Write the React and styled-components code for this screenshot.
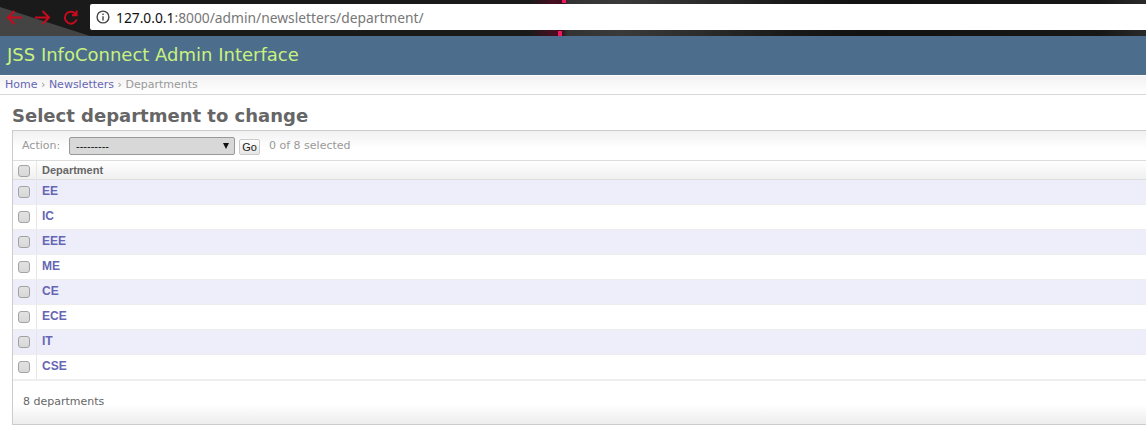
import React from "react";
import styled, { createGlobalStyle } from "styled-components";

const Global = createGlobalStyle`
  html, body { margin: 0; padding: 0; background: #fff; overflow: hidden; }
  body { width: 1146px; height: 426px; font-family: "DejaVu Sans", sans-serif; }
`;
const Page = styled.div`display: flex; flex-direction: column; width: 1146px; height: 426px; overflow: hidden;`;
const Chrome = styled.div`
  position: relative; height: 36px; box-sizing: border-box; padding: 4px 0 6px 0; display: flex; align-items: stretch; flex: none;
  background: linear-gradient(90deg, #1a1a1a 0 530px, #4a0c22 555px, #351020 562px, #333 568px, #3a3a3a 620px, #2c2c2c 700px, #191919 790px, #121212 860px, #171717 1100px, #2a2a2a 1146px);
`;
const Wedge = styled.svg`position: absolute; left: 0; top: 0; width: 90px; height: 36px;`;
const Glow = styled.span`position: absolute; left: ${p => p.$x}px; top: ${p => p.$y}px; width: 4px; height: ${p => p.$h}px; background: #f5155c;`;
const Nav = styled.div`position: relative; width: 90px; flex: none;`;
const NavIcon = styled.svg`position: absolute; top: 5px; width: 17px; height: 17px; left: ${p => p.$x}px; fill: none; stroke: #c90a1c; stroke-width: 2;`;
const Address = styled.div`
  position: relative; flex: 1; background: #fff; border-radius: 2px 0 0 2px; display: flex; align-items: center; padding-left: 6px;
  font: 13.8px "Noto Sans", sans-serif; color: #777; gap: 6px; height: 26px;
`;
const Host = styled.span`color: #111;`;
const Banner = styled.header`
  height: 39px; flex: none; box-sizing: border-box; background: #4d6d8c; color: #c9f27f; font-size: 18px; line-height: 38px; padding-left: 7px;
`;
const Crumbs = styled.nav`
  height: 19px; flex: none; box-sizing: border-box; margin-top: 1px; border-bottom: 1px solid #d8d8d8; background: linear-gradient(#f2f2f2, #fff);
  font-size: 11px; line-height: 17px; padding-left: 5px; color: #999;
  a { color: #6666b3; }
`;
const Sep = styled.span`color: #999;`;
const Content = styled.main`padding: 0 0 0 12px; flex: 1; display: flex; flex-direction: column;`;
const Title = styled.h1`margin: 0; height: 35px; font-size: 18px; font-weight: bold; color: #666; line-height: 41px;`;
const Panel = styled.section`border: 1px solid #ccc; border-right: 0; width: 1134px; box-sizing: border-box; display: flex; flex-direction: column;`;
const Actions = styled.div`
  height: 30px; box-sizing: border-box; display: flex; align-items: center; padding-left: 9px; border-bottom: 1px solid #ddd;
  background: linear-gradient(#f1f1f1, #fff 60%); color: #999; font-size: 11px;
`;
const ActionLabel = styled.span`width: 47px;`;
const Select = styled.div`
  width: 166px; height: 18px; box-sizing: border-box; background: #d8d8d8; border: 1px solid #999; border-radius: 2px; display: flex; align-items: center; justify-content: space-between;
  padding: 0 5px 0 6px; color: #111; font: 11px "Liberation Sans", sans-serif;
`;
const Arrow = styled.span`width: 0; height: 0; border-left: 3px solid transparent; border-right: 3px solid transparent; border-top: 6px solid #111;`;
const Go = styled.button`
  width: 21px; height: 16px; padding: 0; margin: 2px 0 0 4px; box-sizing: border-box; border: 1px solid #ccc; border-radius: 2px; background: linear-gradient(#fff, #e6e6e6); font: 11px "Liberation Sans", sans-serif; color: #222;
`;
const Count = styled.span`margin-left: 9px;`;
const Row = styled.div`
  display: grid; grid-template-columns: 24px 1fr; height: ${p => p.$h}px; box-sizing: border-box; background: ${p => p.$bg};
  border-bottom: 1px solid ${p => p.$line};
`;
const CheckCell = styled.div`display: flex; align-items: center; justify-content: center; border-right: 1px solid #e6e6e6; padding-right: 2px;`;
const Box = styled.span`width: 12px; height: 12px; box-sizing: border-box; border: 1px solid #a2a2a2; border-radius: 3px; background: linear-gradient(#e2e2e2, #d8d8d8);`;
const HeadCell = styled.div`font: bold 11px/19px "Liberation Sans", sans-serif; color: #666; padding-left: 5px;`;
const NameCell = styled.a`font: bold 12px/23px "Liberation Sans", sans-serif; color: #6666b3; padding-left: 5px;`;
const Footer = styled.div`height: 44px; box-sizing: border-box; border-top: 1px solid #eee; background: linear-gradient(#fff 55%, #ededed); color: #666; font-size: 11px; line-height: 41px; padding-left: 10px;`;

const depts = ["EE", "IC", "EEE", "ME", "CE", "ECE", "IT", "CSE"];

export default function App() {
  return (
    <Page>
      <Global />
      <Chrome>
        <Wedge viewBox="0 0 90 36"><polygon points="0,7 0,36 90,36" fill="#444" /></Wedge>
        <Glow $x={562} $y={0} $h={3} />
        <Glow $x={558} $y={31} $h={5} />
        <Nav>
          <NavIcon $x={6} viewBox="0 0 17 17"><path d="M16 8.5H2M8.5 2 2 8.5 8.5 15" /></NavIcon>
          <NavIcon $x={34} viewBox="0 0 17 17"><path d="M1 8.5h14M8.5 2 15 8.5 8.5 15" /></NavIcon>
          <NavIcon $x={62} viewBox="0 0 17 17"><path d="M14 5.5A6 6 0 1 0 14.6 10.5M14.6 1.5v4.7H10" /></NavIcon>
        </Nav>
        <Address>
          <svg width="14" height="14" viewBox="0 0 14 14" fill="none" stroke="#444" strokeWidth="1.4"><circle cx="7" cy="7" r="5.9" /><path d="M7 6.2V10.4M7 3.6v1.4" /></svg>
          <span><Host>127.0.0.1</Host>:8000/admin/newsletters/department/</span>
        </Address>
      </Chrome>
      <Banner>JSS InfoConnect Admin Interface</Banner>
      <Crumbs><a>Home</a> <Sep>›</Sep> <a>Newsletters</a> <Sep>›</Sep> Departments</Crumbs>
      <Content>
        <Title>Select department to change</Title>
        <Panel>
          <Actions>
            <ActionLabel>Action:</ActionLabel>
            <Select><span>---------</span><Arrow /></Select>
            <Go>Go</Go>
            <Count>0 of 8 selected</Count>
          </Actions>
          <Row $h={19} $bg="linear-gradient(#fff, #f0f0f0)" $line="#ddd">
            <CheckCell><Box /></CheckCell>
            <HeadCell>Department</HeadCell>
          </Row>
          {depts.map((d, i) => (
            <Row key={d} $h={25} $bg={i % 2 ? "#fff" : "#eeeefb"} $line="#eee">
              <CheckCell><Box /></CheckCell>
              <NameCell>{d}</NameCell>
            </Row>
          ))}
          <Footer>8 departments</Footer>
        </Panel>
      </Content>
    </Page>
  );
}
